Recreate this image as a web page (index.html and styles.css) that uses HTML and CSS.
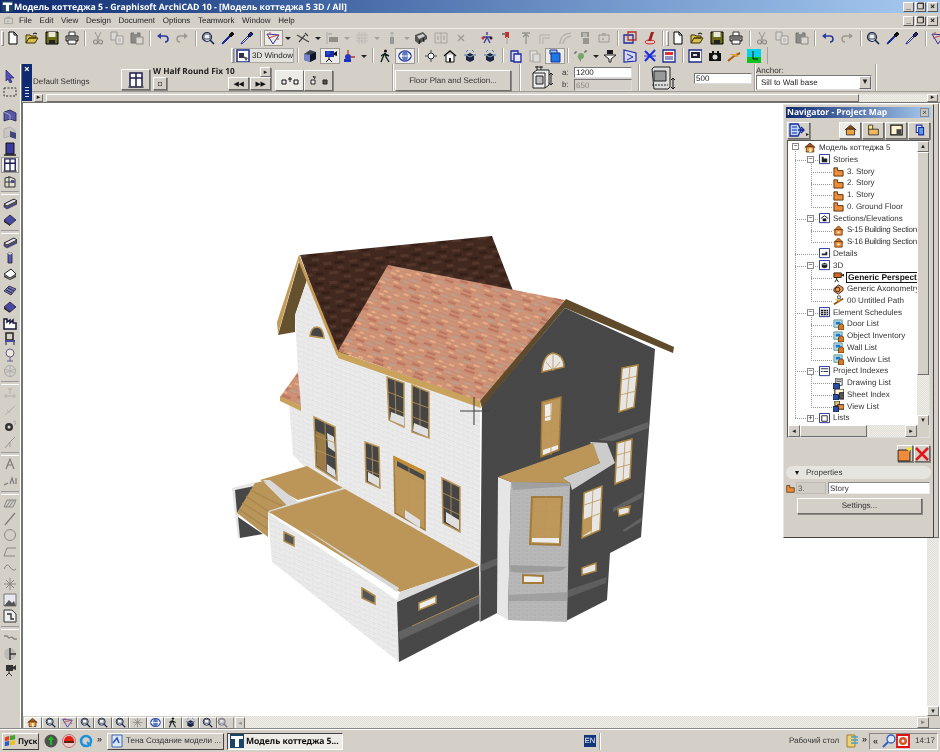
FILE: index.html
```html
<!DOCTYPE html>
<html lang="ru">
<head>
<meta charset="utf-8">
<title>Модель коттеджа 5 - Graphisoft ArchiCAD 10</title>
<link rel="stylesheet" href="styles.css">
</head>
<body>
<svg class="defs" xmlns="http://www.w3.org/2000/svg">
  <symbol id="doc" viewBox="0 0 14 14"><path d="M3 1h5l3 3v9H3z" fill="#fff" stroke="#000"/><path d="M8 1v3h3" fill="none" stroke="#000"/></symbol>
  <symbol id="open" viewBox="0 0 14 14"><path d="M1 12V4h4l1 1h5v2H4l-3 5h9l3-5H4" fill="#d8c050" stroke="#3a3000"/><path d="M8 3q2-2 4 0" fill="none" stroke="#000"/></symbol>
  <symbol id="save" viewBox="0 0 14 14"><path d="M1 1h12v12H1z" fill="#6d6a18" stroke="#000"/><path d="M3.500 1h7v5h-7z" fill="#e8e8d8"/><path d="M4 9h6v4H4z" fill="#222"/></symbol>
  <symbol id="print" viewBox="0 0 14 14"><path d="M4 1h6v4H4z" fill="#fff" stroke="#333"/><path d="M1 5h12v5H1z" fill="#b8b4ac" stroke="#222"/><path d="M3 9h8v4H3z" fill="#fff" stroke="#222"/><path d="M2 7h10" stroke="#333"/></symbol>
  <symbol id="cut" viewBox="0 0 14 14"><path d="M4 1l4 8M10 1L6 9" stroke="#9a9792" fill="none"/><circle cx="4.500" cy="11" r="2" fill="none" stroke="#8c8984" stroke-width="1.200"/><circle cx="9.500" cy="11" r="2" fill="none" stroke="#8c8984" stroke-width="1.200"/></symbol>
  <symbol id="copy" viewBox="0 0 14 14"><path d="M1 1h6v8H1z" fill="#d8d6d0" stroke="#9c9994"/><path d="M6 5h7v8H6z" fill="#e0ded8" stroke="#9c9994"/><path d="M8 8h3M8 10h3" stroke="#aaa"/></symbol>
  <symbol id="paste" viewBox="0 0 14 14"><path d="M1 2h9v10H1z" fill="#8c8a84" stroke="#77746f"/><path d="M4 1h3v2H4z" fill="#ccc"/><path d="M6 6h7v7H6z" fill="#d8d6d0" stroke="#8c8984"/></symbol>
  <symbol id="undo" viewBox="0 0 14 14"><path d="M3 5h6q3 0 3 3t-3 3" fill="none" stroke="#2a3aa0" stroke-width="1.600"/><path d="M1 5l4-3v6z" fill="#2a3aa0"/></symbol>
  <symbol id="redo" viewBox="0 0 14 14"><path d="M11 5H5Q2 5 2 8t3 3" fill="none" stroke="#9c9994" stroke-width="1.500"/><path d="M13 5L9 2v6z" fill="#9c9994"/></symbol>
  <symbol id="zoom" viewBox="0 0 14 14"><circle cx="6" cy="6" r="4.500" fill="#e8f0f8" stroke="#12204c" stroke-width="1.200"/><path d="M9 9l4 4" stroke="#12204c" stroke-width="1.600"/><path d="M3 3h6v5H3z" fill="none" stroke="#444"/></symbol>
  <symbol id="pick" viewBox="0 0 14 14"><path d="M1 13l2-1 6-6-1-1-6 6z" fill="#1a2c9c" stroke="#1a2c9c"/><path d="M8 4l3-3 2 2-3 3z" fill="#111" stroke="#111"/></symbol>
  <symbol id="inj" viewBox="0 0 14 14"><path d="M1 13l2-1 6-6-1-1-6 6z" fill="#fff" stroke="#1a2c9c"/><path d="M8 4l3-3 2 2-3 3z" fill="#1a2c9c" stroke="#111"/></symbol>
  <symbol id="grav" viewBox="0 0 14 14"><path d="M1 3l12 1-6 9z" fill="none" stroke="#3030a0"/><path d="M2 7l10-3M4 1v3M11 8h2" stroke="#c04040" fill="none"/></symbol>
  <symbol id="trim" viewBox="0 0 14 14"><path d="M1 4l12 7M3 11l6-7M9 2l3 3" fill="none" stroke="#444" stroke-width="1.200"/></symbol>
  <symbol id="align" viewBox="0 0 14 14"><path d="M1 1v12" stroke="#aaa"/><path d="M3 6h9v5H3z" fill="#8f8d85"/><path d="M2 3h4" stroke="#999"/></symbol>
  <symbol id="grid" viewBox="0 0 14 14"><path d="M1 4h12M1 7h12M1 10h12M4 1v12M7 1v12M10 1v12" stroke="#bdbab4" fill="none"/></symbol>
  <symbol id="elev" viewBox="0 0 14 14"><path d="M5 6h4v7H5z" fill="#999"/><path d="M7 1v5M5 3l2-2 2 2" stroke="#aaa" fill="none"/></symbol>
  <symbol id="cam3d" viewBox="0 0 14 14"><path d="M1 4l8-3 4 4v3l-8 5-4-3z" fill="#555"/><path d="M3 5l6-2 2 2-6 3z" fill="#cfcfcf"/><path d="M5 13l1-4M10 11l-1-4" stroke="#111"/></symbol>
  <symbol id="half" viewBox="0 0 14 14"><path d="M1 2h12v10H1z" fill="none" stroke="#aaa6a0"/><path d="M7 2v10" stroke="#aaa6a0"/><path d="M3 5h2v4H3zM9 5h2v4H9z" fill="#b8b5af"/></symbol>
  <symbol id="x" viewBox="0 0 14 14"><path d="M4 4l6 6M10 4l-6 6" stroke="#a09d98" stroke-width="1.500"/></symbol>
  <symbol id="fig" viewBox="0 0 14 14"><path d="M7 1v3M3 6h8M4 12l3-6 3 6" stroke="#3f3fa0" fill="none" stroke-width="1.400"/><circle cx="3" cy="7" r="1.500" fill="#c03030"/><circle cx="11" cy="7" r="1.500" fill="#222"/></symbol>
  <symbol id="saw" viewBox="0 0 14 14"><path d="M6 1h4v6H6z" fill="#c83030"/><path d="M8 6v7" stroke="#bbb" stroke-width="2"/><path d="M3 3h4" stroke="#777" stroke-width="2"/></symbol>
  <symbol id="up" viewBox="0 0 14 14"><path d="M3 2h8M7 2v11M4 6l3-3 3 3" stroke="#98958f" fill="none" stroke-width="1.300"/></symbol>
  <symbol id="corner" viewBox="0 0 14 14"><path d="M2 13V4h10M5 13V7h7" fill="none" stroke="#b0ada8"/></symbol>
  <symbol id="arc" viewBox="0 0 14 14"><path d="M2 13Q2 3 13 2M5 13Q5 7 13 5" fill="none" stroke="#b0ada8" stroke-width="1.200"/></symbol>
  <symbol id="blk" viewBox="0 0 14 14"><path d="M3 1h8v5H3zM5 7h6v6H5z" fill="#98958f"/><path d="M6 2v4M8 2v4" stroke="#ddd"/></symbol>
  <symbol id="blk2" viewBox="0 0 14 14"><path d="M2 4h10v7H2z" fill="none" stroke="#9c9994"/><path d="M5 2h4v3H5z" fill="#aaa"/><path d="M5 7h2v2H5z" fill="#aaa"/></symbol>
  <symbol id="solid" viewBox="0 0 14 14"><path d="M1 4h9v8H1z" fill="none" stroke="#1a2c9c" stroke-width="1.300"/><path d="M5 1h8v8H5z" fill="none" stroke="#b03030" stroke-width="1.300"/></symbol>
  <symbol id="eras" viewBox="0 0 14 14"><ellipse cx="7" cy="11" rx="5" ry="2" fill="none" stroke="#e02020"/><path d="M5 10l3-9h3l-3 9z" fill="#a02020"/></symbol>
  <symbol id="win3d" viewBox="0 0 14 14"><path d="M1 1h12v12H1z" fill="#fff" stroke="#1a2a8c" stroke-width="1.500"/><path d="M3 4h5v5H3z" fill="#334"/><path d="M7 7l5 2-2 3z" fill="#555"/></symbol>
  <symbol id="cube" viewBox="0 0 14 14"><path d="M1 5l6-4 6 2v7l-6 3-6-2z" fill="#39434f"/><path d="M1 5l6 1v7l-6-2z" fill="#7484c8"/><path d="M7 6l6-3v7l-6 3z" fill="#10162a"/></symbol>
  <symbol id="cam" viewBox="0 0 14 14"><path d="M2 2h9v6H2z" fill="#1b2ea0"/><circle cx="5" cy="4" r="2" fill="#2b4ad8"/><path d="M11 4l3-2v5l-3-1z" fill="#111"/><path d="M6 8v2M3 13l3-3 3 3" stroke="#111" fill="none"/></symbol>
  <symbol id="axis" viewBox="0 0 14 14"><path d="M2 10h7v3H2z" fill="#2030c0"/><circle cx="6" cy="8" r="3" fill="#2038c8"/><path d="M6 1v5M9 8h4" stroke="#c03030" stroke-width="1.300"/></symbol>
  <symbol id="walk" viewBox="0 0 14 14"><circle cx="7.500" cy="2" r="1.500" fill="#111"/><path d="M7 4L5 8l-2 5M7 4l1 4 3 5M7 5l4 2M6 5L3 7" stroke="#122" fill="none" stroke-width="1.400"/></symbol>
  <symbol id="orb" viewBox="0 0 14 14"><ellipse cx="7" cy="7" rx="6" ry="5" fill="none" stroke="#2a3aa8" stroke-width="1.500"/><ellipse cx="7" cy="7" rx="3" ry="5" fill="#5a7ac0"/><path d="M1 7h12" stroke="#fff"/></symbol>
  <symbol id="sun" viewBox="0 0 14 14"><path d="M7 1v12M1 7h12" stroke="#444"/><circle cx="7" cy="7" r="3" fill="#fff" stroke="#333"/></symbol>
  <symbol id="home" viewBox="0 0 14 14"><path d="M1 7l6-5 6 5" fill="none" stroke="#111" stroke-width="1.400"/><path d="M3 6v7h8V6" fill="#fff" stroke="#111"/><path d="M6 9h2v4H6z" fill="#111"/></symbol>
  <symbol id="orbit" viewBox="0 0 14 14"><path d="M3 3l2-2M11 3L9 1M1 6h2M11 6h2" stroke="#3a78c8"/><path d="M3 6l4-2 4 2v5l-4 2-4-2z" fill="#1d2544"/><path d="M3 6l4 2 4-2" stroke="#8ab" fill="none"/></symbol>
  <symbol id="doc3" viewBox="0 0 14 14"><path d="M2 2h7v10H2z" fill="#d8d8f0" stroke="#1a2a9c" stroke-width="1.300"/><path d="M5 5h7v8H5z" fill="#e8e8f8" stroke="#1a2a9c" stroke-width="1.300"/></symbol>
  <symbol id="doc4" viewBox="0 0 14 14"><path d="M2 2h7v10H2z" fill="#e4e2dc" stroke="#aaa7a2" stroke-width="1.200"/><path d="M5 5h7v8H5z" fill="#dedcd6" stroke="#aaa7a2" stroke-width="1.200"/></symbol>
  <symbol id="doc5" viewBox="0 0 14 14"><path d="M2 1h7v4H2z" fill="#9cc8f0" stroke="#1a2a9c"/><path d="M3 4h9v9H3z" fill="#1e78e0" stroke="#1a2a9c"/></symbol>
  <symbol id="pin" viewBox="0 0 14 14"><path d="M3 7l4 3 4-3-4 3v3z" fill="#5c9a50"/><circle cx="7" cy="7" r="3" fill="#72a868"/><path d="M1 3h2M11 2h2M11 2v2M1 3v2" stroke="#555" fill="none"/></symbol>
  <symbol id="funnel" viewBox="0 0 14 14"><path d="M4 1h6v4H4z" fill="#1b1b1b"/><path d="M1 6h12L8 10v3H6v-3z" fill="#fff" stroke="#222"/></symbol>
  <symbol id="sect" viewBox="0 0 14 14"><path d="M1 1l12 3v8L1 13z" fill="#d8d8f4" stroke="#1a2a9c" stroke-width="1.200"/><path d="M4 5l6 3-6 3" fill="none" stroke="#1a2a9c"/></symbol>
  <symbol id="xblue" viewBox="0 0 14 14"><path d="M2 2l10 10M12 1L2 12" stroke="#1b2cd8" stroke-width="2"/><path d="M1 7h12" stroke="#1b2cd8"/></symbol>
  <symbol id="d3" viewBox="0 0 14 14"><path d="M1 1h12v12H1z" fill="#fff" stroke="#1a2a8c" stroke-width="1.300"/><path d="M3 3h8v3H3z" fill="#e03030"/><path d="M3 8h8M3 10h8" stroke="#1a2a8c"/></symbol>
  <symbol id="film" viewBox="0 0 14 14"><path d="M1 1h13v12H1z" fill="#fff" stroke="#1a2a8c" stroke-width="1.300"/><path d="M3 3h9v6H3z" fill="#223"/><path d="M5 5h4v2H5z" fill="#ddd"/></symbol>
  <symbol id="photo" viewBox="0 0 14 14"><path d="M1 4h12v8H1z" fill="#111"/><circle cx="7" cy="8" r="2.500" fill="#ddd"/><path d="M4 2h2v2H4zM9 2h2v2H9z" fill="#111"/></symbol>
  <symbol id="key" viewBox="0 0 14 14"><path d="M1 12l6-5 6-3" stroke="#a06010" stroke-width="2" fill="none"/><path d="M2 5h7l3 2-2 1z" fill="#e0a030"/></symbol>
  <symbol id="land" viewBox="0 0 14 14"><path d="M0 0h14v8H0z" fill="#0cd0e8"/><path d="M0 8h14v6H0z" fill="#10c020"/><path d="M6 2v8h5" fill="none" stroke="#111"/></symbol>
  <symbol id="win" viewBox="0 0 16 16"><path d="M2 1h12v14H2z" fill="#fff" stroke="#1b1b50" stroke-width="1.500"/><path d="M8 1v14M2 6h12" stroke="#1b1b50" stroke-width="1.500"/><path d="M0 15h16" stroke="#555"/></symbol>
  <symbol id="arrowt" viewBox="0 0 14 14"><path d="M3 1l8 8H7l2 4-2 1-2-4-2 2z" fill="#5050c0" stroke="#20205c" stroke-width=".7"/></symbol>
  <symbol id="marq" viewBox="0 0 14 14"><path d="M1 3h12v8H1z" fill="none" stroke="#333" stroke-dasharray="2 1.500"/></symbol>
  <symbol id="twall" viewBox="0 0 14 14"><path d="M1 3l6-2 6 3v8L7 10l-6 2z" fill="#5858a8" stroke="#20204c" stroke-width=".8"/><path d="M1 3l6 3v4" fill="none" stroke="#aab"/></symbol>
  <symbol id="twall2" viewBox="0 0 14 14"><path d="M1 3l6-2 5 3v8l-5-2-6 2z" fill="#c8c6c0" stroke="#aaa" stroke-width=".8"/><path d="M7 5l6 2v6l-6-2z" fill="#45457c"/></symbol>
  <symbol id="tdoor" viewBox="0 0 14 14"><path d="M3 1h8v11H3z" fill="#3c3ca0" stroke="#111"/><path d="M1 13h12" stroke="#111" stroke-width="1.400"/></symbol>
  <symbol id="tcurt" viewBox="0 0 14 14"><path d="M2 4l5-1 5 2v8H2z" fill="#e0dfd0" stroke="#333"/><path d="M6 2v11M2 8h10" stroke="#333"/><path d="M8 6h3v3H8z" fill="#4a4ab0"/></symbol>
  <symbol id="tbeam" viewBox="0 0 14 14"><path d="M1 8l10-5 3 2-10 5z" fill="#e4e4ec" stroke="#222"/><path d="M1 9l3 2 10-5v2L4 13l-3-2z" fill="#5050a0" stroke="#222" stroke-width=".6"/></symbol>
  <symbol id="tslab" viewBox="0 0 14 14"><path d="M1 7l6-5 6 5-6 5z" fill="#4848a8" stroke="#222" stroke-width=".8"/><path d="M1 7l6 5v1L1 9z" fill="#222"/></symbol>
  <symbol id="tcol" viewBox="0 0 14 14"><path d="M5 2h4v10H5z" fill="#5858b8" stroke="#222" stroke-width=".8"/><ellipse cx="7" cy="2.500" rx="2" ry="1" fill="#ddd"/></symbol>
  <symbol id="troof" viewBox="0 0 14 14"><path d="M1 7l7-5 5 5-6 4z" fill="#fff" stroke="#222"/><path d="M1 8l6 4 6-4v2l-6 3-6-3z" fill="#333"/></symbol>
  <symbol id="tstair" viewBox="0 0 14 14"><path d="M1 8l5-5 7 3-5 6z" fill="#7878c8" stroke="#222" stroke-width=".8"/><path d="M3 7l6 3M5 5l6 3" stroke="#222"/></symbol>
  <symbol id="tplan" viewBox="0 0 14 14"><path d="M1 3h3v3l3-2v3l3-3v3h3v6H1z" fill="#fff" stroke="#16163c" stroke-width="1.500"/></symbol>
  <symbol id="tchair" viewBox="0 0 14 14"><path d="M3 1h7v7H3z" fill="none" stroke="#222" stroke-width="1.500"/><path d="M2 8h10v2H2z" fill="#4848a0"/><path d="M3 10v3M11 10v3" stroke="#222"/></symbol>
  <symbol id="tlamp" viewBox="0 0 14 14"><circle cx="7" cy="5" r="4" fill="#ece8d4" stroke="#60608c"/><path d="M7 9v4M4 13h6" stroke="#60608c"/></symbol>
  <symbol id="tmesh" viewBox="0 0 14 14"><circle cx="7" cy="7" r="5.500" fill="none" stroke="#aaa"/><path d="M2 5l10 4M2 9l10-4M7 2v10" stroke="#b0b0b0"/></symbol>
  <symbol id="tdim" viewBox="0 0 14 14"><path d="M1 10h12M3 8v4M11 8v4M5 3h4M7 3v5" stroke="#b2afa9" fill="none"/></symbol>
  <symbol id="tdim2" viewBox="0 0 14 14"><path d="M2 12L12 3M4 7l3 3" stroke="#b2afa9" fill="none"/></symbol>
  <symbol id="tgear" viewBox="0 0 14 14"><circle cx="6" cy="8" r="4" fill="#333"/><circle cx="6" cy="8" r="1.500" fill="#ddd"/><path d="M10 2l3 1-1 3" stroke="#aaa" fill="none"/></symbol>
  <symbol id="tang" viewBox="0 0 14 14"><path d="M2 13l5-6M7 7l5-5M7 7v5" stroke="#9c9994"/></symbol>
  <symbol id="ttext" viewBox="0 0 14 14"><path d="M3 12l4-10 4 10M5 8h4" fill="none" stroke="#7c7a76" stroke-width="1.200"/></symbol>
  <symbol id="tlabel" viewBox="0 0 14 14"><path d="M1 12l4-2M7 11l2-6 2 6M13 5v6" stroke="#777" fill="none" stroke-width="1.100"/></symbol>
  <symbol id="tfill" viewBox="0 0 14 14"><path d="M1 11l3-7h9l-3 7z" fill="#cfcdc7" stroke="#8a8883"/><path d="M3 11l5-7M6 11l5-7" stroke="#8a8883"/></symbol>
  <symbol id="tline" viewBox="0 0 14 14"><path d="M2 13L12 1" stroke="#7c7a76" stroke-width="1.200"/></symbol>
  <symbol id="tcirc" viewBox="0 0 14 14"><circle cx="7" cy="7" r="5.500" fill="none" stroke="#8a8883"/></symbol>
  <symbol id="tpoly" viewBox="0 0 14 14"><path d="M1 12l3-8h9M1 12h11" fill="none" stroke="#8a8883"/></symbol>
  <symbol id="tspl" viewBox="0 0 14 14"><path d="M1 9q3-7 6-2t6 2" fill="none" stroke="#8a8883"/></symbol>
  <symbol id="tstar" viewBox="0 0 14 14"><path d="M7 1v12M1 7h12M3 3l8 8M11 3l-8 8" stroke="#8a8883"/></symbol>
  <symbol id="tpic" viewBox="0 0 14 14"><path d="M1 1h12v12H1z" fill="#e8e8ee" stroke="#777"/><path d="M1 13l5-6 3 3 2-2 2 5z" fill="#555"/></symbol>
  <symbol id="tdraw" viewBox="0 0 14 14"><path d="M1 1h8l4 4v8H1z" fill="#eee" stroke="#333"/><path d="M4 5h4v5h3" fill="none" stroke="#333" stroke-width="1.400"/></symbol>
  <symbol id="tsec" viewBox="0 0 14 14"><path d="M1 5h3l2 2 3-1 2 2h3" fill="none" stroke="#88857f" stroke-width="1.300"/></symbol>
  <symbol id="tdet" viewBox="0 0 14 14"><circle cx="7" cy="7" r="6" fill="#bcbab4"/><path d="M7 1v12M7 7h6" stroke="#333" stroke-width="1.400"/></symbol>
  <symbol id="tcam" viewBox="0 0 14 14"><path d="M3 2h7v6H3z" fill="#333"/><path d="M10 4l3-2v5l-3-1z" fill="#333"/><path d="M6 8v2M3 13l3-3 3 3" stroke="#333" fill="none"/></symbol>
  <symbol id="s-home" viewBox="0 0 16 14"><path d="M1 7l7-6 7 6" fill="#a8541a" stroke="#3c2208"/><path d="M3 6h10v7H3z" fill="#f09a40" stroke="#3c2208"/><path d="M7 8h3v5H7z" fill="#fff4c0"/></symbol>
  <symbol id="s-story" viewBox="0 0 12 12"><path d="M1 2h4v3h6v6H1z" fill="#ee8c3c" stroke="#50300c"/></symbol>
  <symbol id="s-stories" viewBox="0 0 12 12"><path d="M.5.500h11v10H.5z" fill="#fff" stroke="#1a2a9c"/><path d="M3 3h2v2h4v4H3z" fill="#222"/></symbol>
  <symbol id="s-sec" viewBox="0 0 12 12"><path d="M.5.500h11v10H.5z" fill="#fff" stroke="#1a2a9c"/><path d="M2 6l4-3 4 3" fill="none" stroke="#111"/><path d="M4 6h4v3H4z" fill="#111"/></symbol>
  <symbol id="s-house" viewBox="0 0 12 12"><path d="M1 6l5-5 5 5" fill="#d87a28" stroke="#6c3a10"/><path d="M2 5h8v6H2z" fill="#f09040" stroke="#6c3a10"/><path d="M5 7h2v2H5z" fill="#fff"/></symbol>
  <symbol id="s-det" viewBox="0 0 12 12"><path d="M.5.500h11v10H.5z" fill="#fff" stroke="#1a2a9c"/><path d="M3 8h6V4H7v2H3z" fill="#223"/></symbol>
  <symbol id="s-3d" viewBox="0 0 12 12"><path d="M.5.500h11v10H.5z" fill="#fff" stroke="#1a2a9c"/><path d="M3 4l3-1 3 1v4l-3 1-3-1z" fill="#222"/><path d="M3 4l3 1 3-1" stroke="#ccc" fill="none"/></symbol>
  <symbol id="s-persp" viewBox="0 0 12 12"><path d="M1 1h8v5H1z" fill="#d06a20" stroke="#321"/><path d="M9 3l3-1v3L9 4z" fill="#222"/><path d="M4 6v2M2 11l2-3 2 3" stroke="#111" fill="none"/></symbol>
  <symbol id="s-axo" viewBox="0 0 12 12"><path d="M1 5l5-4 5 3v3l-5 4-5-3z" fill="#ee9a48" stroke="#422"/><circle cx="5" cy="6" r="2.500" fill="none" stroke="#222"/></symbol>
  <symbol id="s-path" viewBox="0 0 12 12"><path d="M1 10l5-3 5-3" stroke="#8a5010" stroke-width="2"/><path d="M2 5h5l2 1-3 1z" fill="#e09828"/><path d="M5 1h3v3H5z" fill="none" stroke="#555"/></symbol>
  <symbol id="s-sched" viewBox="0 0 12 12"><path d="M.5.500h11v10H.5z" fill="#fff" stroke="#1a2a9c"/><path d="M2 3h8v6H2z" fill="#111"/><path d="M2 5h8M2 7h8M5 3v6M8 3v6" stroke="#fff" stroke-width=".7"/></symbol>
  <symbol id="s-lists" viewBox="0 0 12 12"><path d="M.5.500h11v10H.5z" fill="#fff" stroke="#1a2a9c"/><path d="M3 3h6v6H3z" fill="none" stroke="#222"/></symbol>
  <symbol id="s-list" viewBox="0 0 12 12"><path d="M1 1h9v8H1z" fill="#b8e0e8" stroke="#5c8c90"/><path d="M3 3h5v3H3z" fill="#1878d0"/><path d="M6 7l3-2 3 2v5H6z" fill="#d87820" stroke="#2c1c08" stroke-width=".7"/></symbol>
  <symbol id="s-idx" viewBox="0 0 12 12"><path d="M.5.500h11v10H.5z" fill="#fff" stroke="#1a2a9c"/><path d="M2 3h8" stroke="#223"/><path d="M2 6h2M5 6h5" stroke="#223"/></symbol>
  <symbol id="s-draw" viewBox="0 0 12 12"><path d="M3 0h7v8H3z" fill="#fff" stroke="#333"/><path d="M4 2h5M4 4h5" stroke="#333"/><path d="M0 6h7v6H0z" fill="#2c4cb0" stroke="#123"/></symbol>
  <symbol id="s-sheet" viewBox="0 0 12 12"><path d="M2 0h10v8H2z" fill="#fff4d8" stroke="#222" stroke-width="1.200"/><path d="M7 4h5v7H7z" fill="#555" stroke="#222"/><path d="M0 6h6v6H0z" fill="#2c4cb0" stroke="#123"/></symbol>
  <symbol id="s-view" viewBox="0 0 12 12"><path d="M2 0h5v5H2z" fill="#e8c870" stroke="#333"/><path d="M5 4h7v5H5z" fill="#ee8c3c" stroke="#222"/><path d="M0 6h6v6H0z" fill="#2c4cb0" stroke="#123"/></symbol>
  <symbol id="n-map" viewBox="0 0 16 14"><path d="M1 7l7-6 7 6" fill="#8c4a10" stroke="#222"/><path d="M3 6h10v7H3z" fill="#f0a040" stroke="#222"/></symbol>
  <symbol id="n-view" viewBox="0 0 16 14"><path d="M2 1h5v6H2z" fill="#fff080" stroke="#222"/><path d="M2 6h12v7H2z" fill="#f0b860" stroke="#222"/></symbol>
  <symbol id="n-layout" viewBox="0 0 16 14"><path d="M1 1h14v12H1z" fill="#fff4d0" stroke="#111" stroke-width="1.400"/><path d="M8 6h6v6H8z" fill="#444"/></symbol>
  <symbol id="n-pub" viewBox="0 0 16 14"><path d="M4 1h7v9H4z" fill="#d8e8ff" stroke="#1a2a9c" stroke-width="1.300"/><path d="M7 4h6v9H7z" fill="#5c9ae0" stroke="#1a2a9c" stroke-width="1.300"/></symbol>
  <symbol id="n-side" viewBox="0 0 16 14"><path d="M1 1h8l3 6-3 6H1z" fill="#b8d8f8" stroke="#1a2a9c" stroke-width="1.300"/><path d="M9 7h6M12 4l3 3-3 3" fill="none" stroke="#1a2a9c" stroke-width="1.400"/><path d="M3 4h5M3 7h5M3 10h5" stroke="#1a2a9c"/></symbol>
  <symbol id="n-new" viewBox="0 0 16 16"><path d="M1 4h12v11H1z" fill="#ee8c3c" stroke="#222"/><path d="M12 0l1 2 2 1-2 1-1 2-1-2-2-1 2-1z" fill="#ffe820"/></symbol>
  <symbol id="n-del" viewBox="0 0 16 16"><path d="M2 2l12 12M14 2L2 14" stroke="#e01818" stroke-width="2.600"/></symbol>
  <symbol id="q-green" viewBox="0 0 14 14"><circle cx="7" cy="7" r="6.500" fill="#505050"/><path d="M7 2l3 4H8v5H6V6H4z" fill="#18c020"/></symbol>
  <symbol id="q-red" viewBox="0 0 14 14"><circle cx="7" cy="7" r="6.500" fill="#e8c8c8" stroke="#c07070"/><path d="M2 7a5 5 0 0110 0z" fill="#e02010"/><path d="M2 7h10v2H2z" fill="#602010"/></symbol>
  <symbol id="q-blue" viewBox="0 0 14 14"><circle cx="7" cy="7" r="5" fill="none" stroke="#2090d8" stroke-width="2.600"/><path d="M8 8l4 4" stroke="#2090d8" stroke-width="2"/></symbol>
  <symbol id="q-doc" viewBox="0 0 14 14"><path d="M2 1h10v12H2z" fill="#d8e8f8" stroke="#4468a8"/><path d="M3 9l4-5 2 5" stroke="#3050c0" fill="none" stroke-width="1.600"/></symbol>
  <symbol id="q-app" viewBox="0 0 14 14"><path d="M0 0h14v14H0z" fill="#1a4468"/><path d="M1 2h12v3H9v8H5V5H1z" fill="#fff"/></symbol>
  <symbol id="q-flag" viewBox="0 0 14 14"><path d="M1 3l5-2v5l-5 1z" fill="#e04020"/><path d="M7 1l6-1v5l-6 1z" fill="#40a030"/><path d="M1 8l5-1v5l-5 1z" fill="#2060d0"/><path d="M7 7l6-1v5l-6 1z" fill="#f0c020"/></symbol>
  <symbol id="q-desk" viewBox="0 0 14 14"><path d="M2 1h8v12H2z" fill="#f0d070" stroke="#a08030"/><path d="M6 3h7M6 6h7M6 9h7" stroke="#40a0d0" stroke-width="1.500"/></symbol>
  <symbol id="q-find" viewBox="0 0 14 14"><circle cx="9" cy="5" r="4" fill="#d8e8ff" stroke="#3060c0" stroke-width="1.300"/><path d="M6 8l-5 5" stroke="#3060c0" stroke-width="2"/></symbol>
  <symbol id="q-rec" viewBox="0 0 14 14"><path d="M1 1h12v12H1z" fill="#fff" stroke="#e01010" stroke-width="1.800"/><circle cx="7" cy="7" r="4" fill="#e05020"/><circle cx="7" cy="7" r="1.500" fill="#fff"/></symbol>
  <symbol id="b-a" viewBox="0 0 20 14"><path d="M2 6h4v4H2zM14 6h4v4h-4z" fill="#eee" stroke="#111"/><path d="M10 3v5M8 5h4" stroke="#111"/></symbol>
  <symbol id="b-b" viewBox="0 0 20 14"><path d="M2 6h4v4H2z" fill="#eee" stroke="#222"/><path d="M14 6h4v4h-4z" fill="#555" stroke="#222"/><path d="M4 2l2 3M7 3H4" stroke="#222" fill="none"/></symbol>
  <symbol id="big-a" viewBox="0 0 30 26"><path d="M4 8l4-3h12v15l-4 3H4z" fill="#eee" stroke="#222"/><path d="M4 8h12v15" fill="none" stroke="#222"/><path d="M7 11h7v8H7z" fill="#bbb" stroke="#222"/><path d="M8 1v4M12 1v4M6 2h8" stroke="#222"/><path d="M22 8v12M20 10l2-2 2 2M20 18l2 2 2-2" stroke="#222" fill="none"/></symbol>
  <symbol id="big-b" viewBox="0 0 30 26"><path d="M2 4l2-2h16v20l-2 2H4z" fill="#ddd" stroke="#222"/><path d="M4 6h12v10H4z" fill="#999" stroke="#222"/><path d="M2 20h16" stroke="#222" stroke-dasharray="2 1"/><path d="M23 13v11M21 15l2-2 2 2M21 22l2 2 2-2" stroke="#111" fill="none"/></symbol>
</svg>

<div class="titlebar">
  <svg class="ttl-ic"><use href="#q-app"/></svg>
  <span class="ttl-text">Модель коттеджа 5 - Graphisoft ArchiCAD 10 - [Модель коттеджа 5 3D / All]</span>
  <span class="winbtns"><b class="wb">_</b><b class="wb">❐</b><b class="wb">×</b></span>
</div>

<div class="menubar">
  <svg class="menu-ic"><use href="#blk2"/></svg>
  <span class="mi">File</span><span class="mi">Edit</span><span class="mi">View</span><span class="mi">Design</span><span class="mi">Document</span><span class="mi">Options</span><span class="mi">Teamwork</span><span class="mi">Window</span><span class="mi">Help</span>
  <span class="winbtns"><b class="wb">_</b><b class="wb">❐</b><b class="wb">×</b></span>
</div>

<div class="tb1">
  <i class="grip"></i>
  <span class="s"><svg class="i"><use href="#doc"/></svg></span><span class="s"><svg class="i"><use href="#open"/></svg></span><span class="s"><svg class="i"><use href="#save"/></svg></span><span class="s"><svg class="i"><use href="#print"/></svg></span><i class="sep"></i>
  <span class="s"><svg class="i"><use href="#cut"/></svg></span><span class="s"><svg class="i"><use href="#copy"/></svg></span><span class="s"><svg class="i"><use href="#paste"/></svg></span><i class="sep"></i>
  <span class="s"><svg class="i"><use href="#undo"/></svg></span><span class="s"><svg class="i"><use href="#redo"/></svg></span><i class="sep"></i>
  <span class="s"><svg class="i"><use href="#zoom"/></svg></span><span class="s"><svg class="i"><use href="#pick"/></svg></span><span class="s"><svg class="i"><use href="#inj"/></svg></span><i class="sep"></i>
  <span class="s on"><svg class="i"><use href="#grav"/></svg></span><span class="ar"></span>
  <span class="s"><svg class="i"><use href="#trim"/></svg></span><span class="ar"></span>
  <span class="s"><svg class="i"><use href="#align"/></svg></span><span class="ar off"></span>
  <span class="s"><svg class="i"><use href="#grid"/></svg></span><span class="ar off"></span>
  <span class="s"><svg class="i"><use href="#elev"/></svg></span><span class="ar off"></span>
  <span class="s"><svg class="i"><use href="#cam3d"/></svg></span><span class="s"><svg class="i"><use href="#half"/></svg></span><span class="s"><svg class="i"><use href="#x"/></svg></span><i class="gap"></i>
  <span class="s"><svg class="i"><use href="#fig"/></svg></span><span class="s"><svg class="i"><use href="#saw"/></svg></span><span class="s"><svg class="i"><use href="#up"/></svg></span><span class="s"><svg class="i"><use href="#corner"/></svg></span><span class="s"><svg class="i"><use href="#arc"/></svg></span><span class="s"><svg class="i"><use href="#blk"/></svg></span><span class="s"><svg class="i"><use href="#blk2"/></svg></span><i class="sep"></i>
  <span class="s"><svg class="i"><use href="#solid"/></svg></span><span class="s"><svg class="i"><use href="#eras"/></svg></span><i class="sep"></i><i class="grip"></i>
  <span class="s"><svg class="i"><use href="#doc"/></svg></span><span class="s"><svg class="i"><use href="#open"/></svg></span><span class="s"><svg class="i"><use href="#save"/></svg></span><span class="s"><svg class="i"><use href="#print"/></svg></span><i class="sep"></i>
  <span class="s"><svg class="i"><use href="#cut"/></svg></span><span class="s"><svg class="i"><use href="#copy"/></svg></span><span class="s"><svg class="i"><use href="#paste"/></svg></span><i class="sep"></i>
  <span class="s"><svg class="i"><use href="#undo"/></svg></span><span class="s"><svg class="i"><use href="#redo"/></svg></span><i class="sep"></i>
  <span class="s"><svg class="i"><use href="#zoom"/></svg></span><span class="s"><svg class="i"><use href="#pick"/></svg></span><span class="s"><svg class="i"><use href="#inj"/></svg></span><i class="sep"></i>
  <span class="s"><svg class="i"><use href="#grav"/></svg></span>
</div>

<div class="tb2row">
  <div class="tb2">
    <i class="grip"></i>
    <span class="btn3d"><svg class="i"><use href="#win3d"/></svg>3D Window</span><i class="sep"></i>
    <span class="s"><svg class="i"><use href="#cube"/></svg></span><span class="s on"><svg class="i"><use href="#cam"/></svg></span><span class="s"><svg class="i"><use href="#axis"/></svg></span><span class="ar"></span><i class="sep"></i>
    <span class="s"><svg class="i"><use href="#walk"/></svg></span><span class="s on"><svg class="i"><use href="#orb"/></svg></span><i class="sep"></i>
    <span class="s"><svg class="i"><use href="#sun"/></svg></span><span class="s"><svg class="i"><use href="#home"/></svg></span><span class="s"><svg class="i"><use href="#orbit"/></svg></span><span class="s"><svg class="i"><use href="#orbit"/></svg></span><i class="sep"></i>
    <span class="s"><svg class="i"><use href="#doc3"/></svg></span><span class="s"><svg class="i"><use href="#doc4"/></svg></span><span class="s on"><svg class="i"><use href="#doc5"/></svg></span><i class="sep"></i>
    <span class="s"><svg class="i"><use href="#pin"/></svg></span><span class="ar"></span><span class="s"><svg class="i"><use href="#funnel"/></svg></span><span class="s"><svg class="i"><use href="#sect"/></svg></span><span class="s"><svg class="i"><use href="#xblue"/></svg></span><span class="s"><svg class="i"><use href="#d3"/></svg></span><i class="sep"></i>
    <span class="s"><svg class="i"><use href="#film"/></svg></span><span class="s"><svg class="i"><use href="#photo"/></svg></span><span class="s"><svg class="i"><use href="#key"/></svg></span><span class="s"><svg class="i"><use href="#land"/></svg></span>
  </div>
</div>

<div class="body">
  <aside class="toolbox">
    <span class="t"><svg class="i"><use href="#arrowt"/></svg></span><span class="t"><svg class="i"><use href="#marq"/></svg></span><i class="tsep first"></i>
    <span class="t"><svg class="i"><use href="#twall"/></svg></span><span class="t"><svg class="i"><use href="#twall2"/></svg></span><span class="t"><svg class="i"><use href="#tdoor"/></svg></span><span class="t on"><svg class="i"><use href="#win"/></svg></span><span class="t"><svg class="i"><use href="#tcurt"/></svg></span><i class="tsep line"></i>
    <span class="t"><svg class="i"><use href="#tbeam"/></svg></span><span class="t"><svg class="i"><use href="#tslab"/></svg></span><i class="tsep line"></i>
    <span class="t"><svg class="i"><use href="#tbeam"/></svg></span><span class="t"><svg class="i"><use href="#tcol"/></svg></span><span class="t"><svg class="i"><use href="#troof"/></svg></span><span class="t"><svg class="i"><use href="#tstair"/></svg></span><span class="t"><svg class="i"><use href="#tslab"/></svg></span><span class="t"><svg class="i"><use href="#tplan"/></svg></span><span class="t"><svg class="i"><use href="#tchair"/></svg></span><span class="t"><svg class="i"><use href="#tlamp"/></svg></span><span class="t"><svg class="i"><use href="#tmesh"/></svg></span><i class="tsep line"></i>
    <span class="t"><svg class="i"><use href="#tdim"/></svg></span><span class="t"><svg class="i"><use href="#tdim2"/></svg></span><span class="t"><svg class="i"><use href="#tgear"/></svg></span><span class="t"><svg class="i"><use href="#tang"/></svg></span><i class="tsep line"></i>
    <span class="t"><svg class="i"><use href="#ttext"/></svg></span><span class="t"><svg class="i"><use href="#tlabel"/></svg></span><i class="tsep line"></i>
    <span class="t"><svg class="i"><use href="#tfill"/></svg></span><span class="t"><svg class="i"><use href="#tline"/></svg></span><span class="t"><svg class="i"><use href="#tcirc"/></svg></span><span class="t"><svg class="i"><use href="#tpoly"/></svg></span><span class="t"><svg class="i"><use href="#tspl"/></svg></span><span class="t"><svg class="i"><use href="#tstar"/></svg></span><span class="t"><svg class="i"><use href="#tpic"/></svg></span><span class="t"><svg class="i"><use href="#tdraw"/></svg></span><i class="tsep line"></i>
    <span class="t"><svg class="i"><use href="#tsec"/></svg></span><span class="t"><svg class="i"><use href="#tdet"/></svg></span><span class="t"><svg class="i"><use href="#tcam"/></svg></span>
  </aside>

  <div class="work">
    <div class="infowrap">
      <div class="navystrip"><span class="navyx">×</span><i class="navygrip"></i></div>
      <div class="infocol">
        <div class="info">
          <span class="defset">Default Settings</span>
          <span class="bevel winbtn"><svg class="i16"><use href="#win"/></svg></span>
          <div class="namebox">
            <div class="namerow"><b class="name">W Half Round Fix 10</b><span class="bevel smallbtn">▸</span></div>
            <div class="namerow lower"><span class="bevel chk">▫</span><span class="pair"><span class="bevel nav">◀◀</span><span class="bevel nav">▶▶</span></span></div>
          </div>
          <div class="toggles"><span class="bevel tg active"><svg class="tgi"><use href="#b-a"/></svg></span><span class="bevel tg"><svg class="tgi"><use href="#b-b"/></svg></span></div>
          <i class="vline l1"></i>
          <span class="bevel fp">Floor Plan and Section...</span>
          <i class="vline l2"></i>
          <svg class="big ab"><use href="#big-a"/></svg>
          <div class="dims">
            <label class="dim"><span>a:</span><input class="fld" value="1200" readonly></label>
            <label class="dim"><span>b:</span><input class="fld dis" value="650" readonly></label>
          </div>
          <i class="vline l3"></i>
          <svg class="big hb"><use href="#big-b"/></svg>
          <input class="fld hfld" value="500" readonly>
          <i class="vline l4"></i>
          <div class="anchor">
            <span class="anch-l">Anchor:</span>
            <span class="select"><span>Sill to Wall base</span><b class="sarrow">▾</b></span>
          </div>
          <i class="vline l5"></i>
        </div>
        <div class="hstrip">
          <span class="sb-btn sm">▸</span><span class="hthumb"></span><span class="hdither"></span><span class="sb-btn end">▸</span>
        </div>
      </div>
    </div>

    <div class="canvasrow">
      <svg class="house" viewBox="23 103 904 613" xmlns="http://www.w3.org/2000/svg">
        <defs>
          <pattern id="tile" width="42" height="24" patternUnits="userSpaceOnUse" patternTransform="matrix(.94 .34 .5 -.86 0 0)">
            <rect width="42" height="24" fill="#cf9478"/>
            <g fill="#e8ab84"><rect x="1" y="1" width="5" height="2.300"/><rect x="15" y="5" width="6" height="2.300"/><rect x="28" y="9" width="5" height="2.300"/><rect x="6" y="13" width="6" height="2.300"/><rect x="21" y="17" width="5" height="2.300"/><rect x="35" y="21" width="5" height="2.300"/><rect x="30" y="17" width="4" height="2.300"/><rect x="24" y="21" width="4" height="2.300"/></g>
            <g fill="#bd7560"><rect x="9" y="1" width="9" height="2.300"/><rect x="30" y="5" width="9" height="2.300"/><rect x="2" y="9" width="8" height="2.300"/><rect x="24" y="13" width="9" height="2.300"/><rect x="9" y="21" width="11" height="2.300"/></g>
            <g fill="#bba08e"><rect x="24" y="1" width="6" height="2.300"/><rect x="4" y="5" width="6" height="2.300"/><rect x="16" y="9" width="6" height="2.300"/><rect x="36" y="13" width="5" height="2.300"/><rect x="1" y="17" width="6" height="2.300"/></g>
            <g stroke="#b07e68" stroke-width=".4"><path d="M0 4h42M0 8h42M0 12h42M0 16h42M0 20h42M0 24h42"/></g>
          </pattern>
          <pattern id="dtile" width="26" height="20" patternUnits="userSpaceOnUse" patternTransform="matrix(.99 -.1 .3 .95 0 0)">
            <rect width="26" height="20" fill="#42291f"/>
            <g fill="#52362a"><rect x="1" y="1" width="8" height="3"/><rect x="14" y="6" width="6" height="3"/><rect x="4" y="11" width="9" height="3"/><rect x="17" y="16" width="7" height="3"/></g>
            <g fill="#352017"><rect x="12" y="1" width="9" height="3"/><rect x="1" y="6" width="8" height="3"/><rect x="16" y="11" width="8" height="3"/></g>
          </pattern>
          <pattern id="brick" width="10" height="5" patternUnits="userSpaceOnUse" patternTransform="matrix(.94 .34 0 1 0 0)">
            <rect width="10" height="5" fill="#ececec"/>
            <path d="M0 2.500h10M0 5h10M3 0v2.500M8 2.500V5" stroke="#dcdcdc" stroke-width=".6"/>
          </pattern>
          <pattern id="brickg" width="8" height="4" patternUnits="userSpaceOnUse">
            <rect width="8" height="4" fill="#bababa"/>
            <path d="M0 2h8M0 4h8M3 0v2M7 2v2" stroke="#acacac" stroke-width=".5"/>
          </pattern>
          <pattern id="dark" width="6" height="4" patternUnits="userSpaceOnUse" patternTransform="matrix(.9 -.42 0 1 0 0)">
            <rect width="6" height="4" fill="#484848"/>
            <path d="M0 2h6" stroke="#424242" stroke-width=".5"/>
          </pattern>
        </defs>

        <!-- back roof -->
        <polygon fill="url(#dtile)" points="300,255 492,236 530,335 337,356"/>
        <!-- gable -->
        <polygon fill="#66512f" points="300,258 278,335 295,332 295,315 307,280"/>
        <polygon fill="url(#brick)" points="307,280 338,354 480,405 480,622 305,467 293,455 289,403 301,407 298,372 295,316"/>
        <polygon fill="#c49c58" points="300,256 278,334 277,322 299,255"/>
        <polygon fill="#c49c58" points="299,255 339,353 337,356 298,260"/>
        <!-- side roof -->
        <polygon fill="url(#tile)" points="298,372 280,397 301,406"/>
        <polygon fill="#c9a25c" points="280,396 301,406 301,411 280,401"/>

        <!-- front wall windows -->
        <g class="winfr">
          <path class="wd" d="M310 336q1-9 7-9t7 11z"/>
          <polygon class="wd" points="387,377 404,383 404,427 389,420"/>
          <polygon class="wd" points="412,385 429,392 429,438 412,432"/>
          <polygon class="wd" points="314,417 335,427 337,480 316,467"/>
          <polygon class="wd" points="365,442 379,447 380,488 366,482"/>
          <polygon class="wg" points="394,457 425,472 425,530 395,513"/>
          <polygon class="wd" points="442,478 460,487 460,532 443,523"/>
        </g>
        <polygon fill="#9c7d48" points="316,431 325,435 326,472 317,466"/>
        <polygon fill="#ddd" points="327,433 334,437 335,452 328,447"/>
        <polygon fill="#ddd" points="327,464 335,470 336,478 327,472"/>
        <polygon fill="#484848" points="397,461 424,475 424,480 397,466"/>
        <g class="mull">
          <path d="M395 381l1 43M388 392l16 6M389 407l15 6M420 389v46M412 402l17 6M413 417l16 6M325 422l1 50M315 435l20 8M316 450l20 8M372 445l1 40M365 457l14 5M366 470l14 5M409 465v55M394 470l31 14M395 486l30 14M394 458l31 15"/>
          <path d="M451 483v44M443 493l17 8M443 507l17 8"/>
        </g>
        <polygon fill="#e0e0e0" points="405,510 420,520 420,528 405,518"/>
        <polygon fill="#e0e0e0" points="391,412 404,417 404,426 390,420"/>
        <polygon fill="#e0e0e0" points="414,423 428,429 428,437 413,431"/>
        <polygon fill="#e0e0e0" points="446,512 459,520 459,530 446,522"/>
        <polygon fill="#e0e0e0" points="368,472 379,478 379,487 368,481"/>
        <polygon fill="#c98a2a" points="394,456 425,471 425,474 394,459"/>

        <!-- main roof -->
        <polygon fill="url(#tile)" points="388,265 565,300 480,402 338,351"/>
        <polygon fill="#c9a25c" points="337,351 480,401 481,408 338,358"/>
        <polygon fill="#5f4a2b" points="566,299 674,347 673,353 565,308 482,408 480,401"/>

        <!-- right wall -->
        <polygon fill="url(#dark)" points="482,407 565,308 655,349 641,537 610,553 607,600 566,621 510,620 497,613 480,622"/>
        <polygon fill="#626262" points="598,440 648,422 649,428 613,441"/>
        <polygon fill="#626262" points="613,508 643,492 642,498 613,512"/>
        <polygon fill="#626262" points="623,530 642,517 641,522 624,532"/>
        <polygon fill="#5e5e5e" points="568,590 607,577 606,583 567,598"/>
        <polygon fill="#5e5e5e" points="480,565 497,558 497,565 480,572"/>

        <g class="winfr">
          <path class="wl" d="M542 372q1-17 11-19 11 2 11 14z"/>
          <polygon class="wg" points="542,402 561,397 559,450 541,457"/>
          <polygon class="wl" points="622,368 638,365 634,407 619,412"/>
          <polygon class="wl" points="617,443 632,439 630,478 615,484"/>
          <polygon class="wl" points="584,493 602,486 600,530 582,538"/>
          <polygon class="wl" points="582,568 596,563 596,571 582,575"/>
          <polygon class="wl" points="618,509 630,506 629,513 619,516"/>
        </g>
        <polygon fill="#eee" points="545,405 552,403 551,420 545,421"/>
        <polygon fill="#eee" points="543,450 558,445 558,449 543,455"/>
        <polygon fill="#bd985a" points="583,520 592,516 592,530 583,536"/>
        <g class="mullg">
          <path d="M551 400v55M543 418l18-5M542 435l18-6M630 366l-4 45M621 380l16-4M620 395l16-4M625 441l-2 41M617 455l15-4M616 468l15-4M593 489l-2 45M584 505l18-6M583 520l18-7"/>
          <path d="M553 353v18M546 362l7 8M560 362l-7 8"/>
        </g>

        <!-- bay -->
        <polygon fill="#e6e6e6" points="498,477 511,482 508,620 497,613"/>
        <polygon fill="url(#brickg)" points="511,482 570,483 567,622 508,620"/>
        <polygon fill="#a0a0a0" points="511,482 570,483 570,486 513,490"/>
        <polygon fill="#9c9c9c" points="510,565 567,567 560,571 525,573 511,572"/>
        <polygon fill="#a0a0a0" points="509,595 567,592 567,601 508,601"/>
        <polygon fill="#ccc" points="590,442 607,443 615,463 572,490 570,483 562,478 600,463"/>
        <polygon fill="#bb9658" points="498,477 593,443 600,463 562,478 570,483 511,482"/>
        <polygon fill="#bd985a" stroke="#a37c3c" stroke-width="2" points="532,497 562,497 560,545 530,544"/>
        <path class="mull" d="M546 497l-1 47M532 511h30M531 528h30"/>
        <polygon fill="#ececec" points="532,538 559,538 559,543 532,542"/>
        <polygon fill="#ececec" stroke="#a37c3c" stroke-width="2" points="523,575 543,576 543,583 523,583"/>

        <!-- terraces -->
        <polygon fill="#bb9658" points="260,480 307,466 343,488 298,500"/>
        <polygon fill="#e6e6e6" points="232,488 255,482 258,486 238,491 240,538 238,538"/>
        <polygon fill="#474747" points="235,490 255,486 237,513"/>
        <polygon fill="#474747" points="238,517 263,534 240,538"/>
        <polygon fill="#b9955a" points="255,483 263,481 287,505 268,512 268,537 237,513"/>
        <path d="M250 490l32 16M246 496l23 16M242 503l26 16M239 509l29 20" stroke="#a8864c" stroke-width="1.200"/>
        <polygon fill="#d9d9d9" points="263,480 270,480 298,502 287,505"/>
        <polygon fill="#d9d9d9" points="268,511 343,488 346,490 270,514"/>
        <polygon fill="url(#brick)" points="268,513 397,600 399,662 272,562"/>
        <polygon fill="#bb9658" points="269,512 345,489 479,565 400,592"/>
        <polygon fill="#d8d8d8" points="302,527 399,588 397,592"/>
        <polygon fill="#dcdcdc" points="479,565 400,592 397,601 440,588"/>
        <polygon fill="url(#dark)" points="397,602 479,566 480,620 399,662"/>
        <polygon fill="#626262" points="398,632 480,595 480,603 400,640"/>
        <path d="M412 626l68-31" stroke="#a8864c"/>
        <path d="M480 565v57" stroke="#c8c8c8" stroke-width="1"/>
        <g class="winsm">
          <polygon points="284,532 294,537 294,546 284,541"/>
          <polygon points="362,588 375,596 375,604 362,598"/>
          <polygon class="lite" points="419,603 436,596 436,603 419,610"/>
        </g>

        <!-- pointer -->
        <path d="M460 411h29M474 397v28" stroke="#3c3c3c" stroke-width="1" fill="none"/>
      </svg>
      <div class="vscroll">
        <span class="vthumb"></span><span class="vdither"></span><span class="sb-btn down">▾</span>
      </div>

      <section class="nav-pal">
        <header class="nav-title"><span>Navigator - Project Map</span><b class="nav-close">×</b></header>
        <div class="nav-tabs">
          <span class="bevel side"><svg class="i16"><use href="#n-side"/></svg><i class="mini">▸</i></span>
          <span class="tabset"><span class="bevel tab on"><svg class="tbi"><use href="#n-map"/></svg></span><span class="bevel tab"><svg class="tbi"><use href="#n-view"/></svg></span><span class="bevel tab"><svg class="tbi"><use href="#n-layout"/></svg></span><span class="bevel tab"><svg class="tbi"><use href="#n-pub"/></svg></span></span>
        </div>
        <div class="treebox">
          <ul class="tree">
            <li class="r d0"><i class="ex">−</i><svg class="ti w16"><use href="#s-home"/></svg><span>Модель коттеджа 5</span></li>
            <li class="r d1"><i class="ex">−</i><svg class="ti"><use href="#s-stories"/></svg><span>Stories</span></li>
            <li class="r d2"><svg class="ti"><use href="#s-story"/></svg><span>3. Story</span></li>
            <li class="r d2"><svg class="ti"><use href="#s-story"/></svg><span>2. Story</span></li>
            <li class="r d2"><svg class="ti"><use href="#s-story"/></svg><span>1. Story</span></li>
            <li class="r d2"><svg class="ti"><use href="#s-story"/></svg><span>0. Ground Floor</span></li>
            <li class="r d1"><i class="ex">−</i><svg class="ti"><use href="#s-sec"/></svg><span>Sections/Elevations</span></li>
            <li class="r d2"><svg class="ti"><use href="#s-house"/></svg><span class="tight">S-15 Building Section</span></li>
            <li class="r d2"><svg class="ti"><use href="#s-house"/></svg><span class="tight">S-16 Building Section</span></li>
            <li class="r d1"><svg class="ti"><use href="#s-det"/></svg><span>Details</span></li>
            <li class="r d1"><i class="ex">−</i><svg class="ti"><use href="#s-3d"/></svg><span>3D</span></li>
            <li class="r d2"><svg class="ti"><use href="#s-persp"/></svg><span class="cur">Generic Perspecti</span></li>
            <li class="r d2"><svg class="ti"><use href="#s-axo"/></svg><span>Generic Axonometry</span></li>
            <li class="r d2"><svg class="ti"><use href="#s-path"/></svg><span>00 Untitled Path</span></li>
            <li class="r d1"><i class="ex">−</i><svg class="ti"><use href="#s-sched"/></svg><span>Element Schedules</span></li>
            <li class="r d2"><svg class="ti"><use href="#s-list"/></svg><span>Door List</span></li>
            <li class="r d2"><svg class="ti"><use href="#s-list"/></svg><span>Object Inventory</span></li>
            <li class="r d2"><svg class="ti"><use href="#s-list"/></svg><span>Wall List</span></li>
            <li class="r d2"><svg class="ti"><use href="#s-list"/></svg><span>Window List</span></li>
            <li class="r d1"><i class="ex">−</i><svg class="ti"><use href="#s-idx"/></svg><span>Project Indexes</span></li>
            <li class="r d2"><svg class="ti"><use href="#s-draw"/></svg><span>Drawing List</span></li>
            <li class="r d2"><svg class="ti"><use href="#s-sheet"/></svg><span>Sheet Index</span></li>
            <li class="r d2"><svg class="ti"><use href="#s-view"/></svg><span>View List</span></li>
            <li class="r d1"><i class="ex">+</i><svg class="ti"><use href="#s-lists"/></svg><span>Lists</span></li>
          </ul>
          <div class="tvs"><span class="sb-btn up">▴</span><span class="tvthumb"></span><span class="tvd"></span><span class="sb-btn dn">▾</span></div>
          <div class="ths"><span class="sb-btn l">◂</span><span class="ththumb"></span><span class="thd"></span><span class="sb-btn r2">▸</span></div>
        </div>
        <div class="nav-actions"><span class="bevel act"><svg class="i16"><use href="#n-new"/></svg></span><span class="bevel act"><svg class="i16"><use href="#n-del"/></svg></span></div>
        <div class="pill"><b class="pill-ar">▾</b>Properties</div>
        <div class="prop"><svg class="ti sm"><use href="#s-story"/></svg><input class="p1" value="3." readonly><input class="p2" value="Story" readonly></div>
        <span class="bevel settings">Settings...</span>
      </section>
    </div>

    <div class="status">
      <span class="st on"><svg class="i"><use href="#s-home"/></svg></span><span class="st"><svg class="i"><use href="#zoom"/></svg></span><span class="st"><svg class="i"><use href="#grav"/></svg></span><span class="st"><svg class="i"><use href="#zoom"/></svg></span><span class="st"><svg class="i"><use href="#zoom"/></svg></span><span class="st"><svg class="i"><use href="#zoom"/></svg></span><span class="st"><svg class="i"><use href="#tstar"/></svg></span><span class="st on"><svg class="i"><use href="#orb"/></svg></span><span class="st"><svg class="i"><use href="#walk"/></svg></span><span class="st"><svg class="i"><use href="#orbit"/></svg></span><span class="st"><svg class="i"><use href="#zoom"/></svg></span><span class="st dim"><svg class="i"><use href="#zoom"/></svg></span><span class="st narrow">◂</span>
      <span class="sdither"></span><span class="sb-btn rt">▸</span>
    </div>
  </div>
</div>

<footer class="taskbar">
  <span class="start"><svg class="fl"><use href="#q-flag"/></svg>Пуск</span>
  <span class="ql"><svg class="i"><use href="#q-green"/></svg><svg class="i"><use href="#q-red"/></svg><svg class="i"><use href="#q-blue"/></svg></span>
  <b class="chev">»</b>
  <span class="task"><svg class="i"><use href="#q-doc"/></svg>Тена Создание модели ...</span>
  <span class="task act-t"><svg class="i"><use href="#q-app"/></svg>Модель коттеджа 5...</span>
  <span class="en">EN</span>
  <i class="tb-sep"></i>
  <span class="desk">Рабочий стол</span>
  <svg class="i dsk"><use href="#q-desk"/></svg>
  <b class="chev c2">»</b>
  <span class="tray"><b class="trl">«</b><svg class="i"><use href="#q-find"/></svg><svg class="i"><use href="#q-rec"/></svg><span class="clock">14:17</span></span>
</footer>
</body>
</html>
```
FILE: styles.css
```css
* { box-sizing: border-box; }
html, body { margin: 0; padding: 0; }
html { background: #d4d0c8; }
body {
  width: 940px; height: 752px; overflow: hidden; background: #d4d0c8; color: #222;
  font: 8px/1 "Liberation Sans", Arial, sans-serif;
  text-rendering: geometricPrecision;
  display: flex; flex-direction: column; position: relative;
  filter: blur(.3px);
}
i, b { font-style: normal; }
input { text-rendering: geometricPrecision; }
.defs { display: none; }
.i { width: 14px; height: 14px; display: block; flex: none; }
.i16 { width: 16px; height: 16px; display: block; flex: none; }
.bevel {
  background: #d4d0c8; border: 1px solid; border-color: #fff #6e6c68 #6e6c68 #fff;
  box-shadow: 1px 1px 0 #8a8884; display: flex; align-items: center; justify-content: center;
}

/* Title and menu */
.titlebar {
  height: 13px; flex: none; display: flex; align-items: center; padding-left: 2px; color: #fff;
  background: linear-gradient(90deg, #0f2a70 0%, #3a5f9e 30%, #6f94c8 62%, #a6caf0 100%);
  font: bold 8.7px "Open Sans", "Liberation Sans", sans-serif;
}
.ttl-ic { width: 11px; height: 11px; margin-right: 1px; }
.ttl-text { white-space: nowrap; }
.winbtns { margin-left: auto; padding-right: 2px; display: flex; gap: 1px; }
.wb {
  width: 11px; height: 10px; background: #d4d0c8; border: 1px solid; border-color: #fff #555 #555 #fff;
  color: #111; font: bold 8px/8px "Liberation Sans", sans-serif; text-align: center;
}
.menubar { height: 15px; flex: none; display: flex; align-items: center; padding-left: 3px; }
.menu-ic { width: 11px; height: 13px; margin-right: 5px; }
.mi { margin-right: 7.700px; color: #222; }

/* Toolbars */
.tb1 {
  height: 19px; flex: none; display: flex; align-items: center; overflow: hidden; padding-left: 1px;
  border-top: 1px solid #f0eee8;
}
.grip { width: 3px; height: 15px; flex: none; border: 1px solid; border-color: #fff #888 #888 #fff; margin-right: -1px; }
.s { width: 19.6px; height: 16px; flex: none; display: flex; align-items: center; justify-content: center; }
.s.on { background: #ecebe6; outline: 1px solid #9c9a95; outline-offset: -1px; }
.ar { width: 10px; height: 16px; flex: none; position: relative; }
.ar::after {
  content: ""; position: absolute; left: 2px; top: 7px;
  border: 3px solid transparent; border-top-color: #222; border-bottom: 0;
}
.ar.off::after { border-top-color: #a5a29c; }
.sep { width: 1px; height: 15px; flex: none; background: #a5a29c; margin: 0 2.700px; box-shadow: 1px 0 0 #fff; }
.gap { width: 6.400px; flex: none; }
.tb2row { height: 17px; flex: none; padding-left: 231px; }
.tb2 {
  display: flex; align-items: center; height: 17px; width: 537px; overflow: hidden;
  border-right: 1px solid #a5a29c;
}
.btn3d {
  width: 60px; height: 15px; margin-left: 1px; flex: none; display: flex; align-items: center; gap: 2px; padding-left: 2px;
  background: #e4e2dc; outline: 1px solid #aaa8a2; outline-offset: -1px; white-space: nowrap;
}

/* Layout below */
.body { flex: 1; display: flex; min-height: 0; }
.toolbox {
  width: 22px; flex: none; display: flex; flex-direction: column; align-items: center;
  padding: 4px 1px 0 0; border-right: 1px solid #77756f; box-shadow: inset -1px 0 0 #fff;
}
.t { width: 18px; height: 16.200px; flex: none; display: flex; align-items: center; justify-content: center; }
.t.on { background: #f0eee9; outline: 1px solid #9c9a95; outline-offset: -1px; }
.tsep { height: 6px; width: 18px; flex: none; position: relative; }
.tsep.first { height: 8px; }
.tsep.line::after { content: ""; position: absolute; left: 0; right: 0; top: 2px; height: 2px; border-top: 1px solid #999; border-bottom: 1px solid #fff; }
.work { flex: 1; min-width: 0; display: flex; flex-direction: column; }

/* Info box */
.infowrap { display: flex; height: 39px; flex: none; border-bottom: 1px solid #77756f; }
.navystrip {
  width: 10px; flex: none; background: #0f2a70; color: #fff; position: relative; margin-bottom: 1px;
  text-align: center; font: bold 9px/10px "Liberation Sans", sans-serif;
}
.navyx { display: block; }
.navygrip {
  position: absolute; left: 3px; bottom: 2px; width: 4px; height: 12px;
  background: repeating-linear-gradient(#d8d8e8 0 1px, transparent 1px 3px);
}
.infocol { flex: 1; min-width: 0; display: flex; flex-direction: column; }
.info { height: 28px; flex: none; display: flex; align-items: stretch; position: relative; border-bottom: 1px solid #9c9a95; }
.defset { width: 89px; flex: none; padding-left: 1px; align-self: center; margin-top: 9px; white-space: nowrap; color: #333; }
.winbtn { width: 29px; height: 21px; flex: none; align-self: flex-end; margin-bottom: 1px; }
.namebox { width: 118px; margin-left: 3px; flex: none; display: flex; flex-direction: column; justify-content: space-between; padding: 2px 0 1px; }
.namerow { display: flex; align-items: center; justify-content: space-between; }
.name { font: bold 8.300px "Noto Sans", "Liberation Sans", sans-serif; color: #222; white-space: nowrap; }
.smallbtn { width: 11px; height: 10px; font: 7px "DejaVu Sans", sans-serif; }
.chk { width: 14px; height: 13px; font: 8px "DejaVu Sans", sans-serif; }
.pair { display: flex; gap: 1px; }
.nav { width: 21px; height: 13px; font: 7px "DejaVu Sans", sans-serif; letter-spacing: -.5px; color: #111; }
.toggles { display: flex; margin-left: 4px; align-self: flex-end; margin-bottom: 0; }
.tg { width: 29px; height: 21px; }
.tg.active { background: #ecebe6; }
.tgi { width: 20px; height: 14px; display: block; }
.vline { width: 1px; flex: none; background: #a5a29c; box-shadow: 1px 0 0 #fff; }
.l1 { margin-left: 59px; }
.fp { width: 116px; height: 21px; margin-left: 2px; align-self: flex-end; flex: none; color: #333; }
.l2 { margin-left: 8px; }
.big { width: 30px; height: 26px; flex: none; align-self: center; }
.ab { margin-left: 9px; }
.dims { width: 77px; flex: none; display: flex; flex-direction: column; gap: 1px; margin-left: 2px; padding-top: 3px; }
.dim { display: flex; align-items: center; justify-content: space-between; padding-right: 6px; padding-left: 1px; color: #333; }
.fld {
  width: 58px; height: 11px; padding: 0 1px; font: 8px "Liberation Sans", sans-serif; background: #fff; color: #222;
  border: 1px solid; border-color: #777 #ddd #ddd #777; outline: 0;
}
.fld.dis { background: #d4d0c8; color: #8c8a85; height: 12px; }
.l3 { margin-left: 0; }
.hb { margin-left: 11px; }
.hfld { margin-left: 14px; align-self: center; margin-top: 2px; }
.l4 { margin-left: 2px; }
.anchor { width: 120px; flex: none; padding: 2px 0 0 1px; }
.anch-l { display: block; height: 9px; line-height: 9px; color: #333; }
.select {
  width: 116px; height: 15px; background: #fff; border: 1px solid; border-color: #777 #ddd #ddd #777;
  display: flex; align-items: center; justify-content: space-between; padding-left: 4px; color: #222;
}
.sarrow { width: 12px; height: 13px; background: #d4d0c8; border: 1px solid; border-color: #fff #666 #666 #fff; font: 9px/10px "DejaVu Sans", sans-serif; text-align: center; }
.hstrip { height: 10px; flex: none; display: flex; align-items: center; padding-top: 1px; }
.sb-btn {
  display: flex; align-items: center; justify-content: center; background: #d4d0c8; flex: none;
  border: 1px solid; border-color: #fff #6e6c68 #6e6c68 #fff; font: 7px/1 "DejaVu Sans", sans-serif; color: #222;
}
.sm { width: 9px; height: 8px; margin-left: 2px; }
.hthumb { width: 813px; height: 8px; margin-left: 3px; flex: none; background: #d4d0c8; border: 1px solid; border-color: #fff #6e6c68 #6e6c68 #fff; }
.hdither, .vdither, .sdither, .tvd, .thd { background: repeating-conic-gradient(#e2dfd9 0 25%, #efede8 0 50%) 0 0/2px 2px; }
.hdither { flex: 1; height: 8px; }
.end { width: 11px; height: 8px; margin-right: 2px; }

/* Canvas */
.canvasrow { flex: 1; min-height: 0; display: flex; position: relative; background: #fff; border-left: 1px solid #77756f; }
.house { flex: none; width: 904px; height: 613px; display: block; }
.winfr .wd { fill: #454545; stroke: #bb9658; stroke-width: 1.500; }
.winfr .wl { fill: #e8e6e4; stroke: #a98540; stroke-width: 1.500; }
.winfr .wg { fill: #bd985a; stroke: #a37c3c; stroke-width: 1.500; }
.mull { fill: none; stroke: #bb9658; stroke-width: .8; }
.mullg { fill: none; stroke: #bb9658; stroke-width: .8; }
.winsm polygon { fill: #555; stroke: #b08c4c; stroke-width: 1.500; }
.winsm .lite { fill: #eee; }
.vscroll { flex: none; width: 12px; display: flex; flex-direction: column; }
.vthumb { height: 435px; flex: none; background: #d4d0c8; border: 1px solid; border-color: #fff #6e6c68 #6e6c68 #fff; }
.vdither { flex: 1; }
.down { height: 10px; }

/* Navigator palette */
.nav-pal {
  position: absolute; left: 760px; top: 1px; width: 151px; height: 434px;
  background: #d4d0c8; border: 1px solid; border-color: #e8e6e0 #444 #444 #e8e6e0; padding: 0 2px 1px;
  display: flex; flex-direction: column;
}
.nav-title {
  height: 11px; flex: none; display: flex; align-items: center; justify-content: space-between; padding: 0 2px 0 1px;
  margin: 2px 0 0 0; background: linear-gradient(90deg, #0f2a70, #a6caf0); color: #fff;
  font: bold 8.500px "Open Sans", "Liberation Sans", sans-serif; white-space: nowrap;
}
.nav-close { width: 9px; height: 9px; background: #c8c6c0; color: #444; border: 1px solid #888; font: 8px/7px "Liberation Sans", sans-serif; text-align: center; }
.nav-tabs { height: 22px; flex: none; display: flex; align-items: center; padding: 2px 0 0 1px; }
.side { width: 23px; height: 17px; position: relative; justify-content: flex-start; padding-left: 1px; }
.mini { position: absolute; right: 0; bottom: 0; font: 6px/1 "DejaVu Sans", sans-serif; }
.tabset { display: flex; margin-left: auto; margin-right: 1px; gap: 1px; }
.tab { width: 22px; height: 17px; }
.tab.on { background: #ecebe6; }
.tbi { width: 13px; height: 12px; display: block; }
.treebox {
  position: relative; width: 143px; height: 298px; flex: none; background: #fff; margin-left: 1px;
  border: 1px solid; border-color: #555 #ddd #ddd #555; padding-right: 12px;
  overflow: hidden;
}
.tree { list-style: none; margin: 0; padding: 0; position: relative; overflow: hidden; height: 284px; white-space: nowrap; color: #333; }
.tree::before { content: ""; position: absolute; left: 7px; top: 6px; bottom: 7px; border-left: 1px dotted #999; }
.r { height: 11.760px; display: flex; align-items: center; position: relative; }
.r.d0 { padding-left: 16px; height: 13px; }
.r.d1 { padding-left: 31px; }
.r.d2 { padding-left: 45px; }
.d1::before { content: ""; position: absolute; left: 7px; top: 50%; width: 23px; border-top: 1px dotted #999; }
.d2::before { content: ""; position: absolute; left: 23px; top: -6px; height: 12px; width: 22px; border: dotted #999; border-width: 0 0 1px 1px; }
.ex {
  position: absolute; top: 2px; width: 7px; height: 7px; background: #fff; border: 1px solid #888; z-index: 1;
  font: 7px/5px "Liberation Sans", sans-serif; text-align: center; color: #111;
}
.d0 .ex { left: 4px; }
.d1 .ex { left: 19px; }
.ti { width: 11px; height: 11px; flex: none; margin-right: 3px; position: relative; z-index: 1; background: #fff; }
.w16 { width: 12px; height: 11px; margin-right: 3px; }
.tight { letter-spacing: -.32px; }
.cur { font-weight: bold; color: #111; outline: 1px solid #111; padding: 0 1px; font-size: 8.400px; }
.tvs { position: absolute; right: 0; top: 0; bottom: 11px; width: 12px; display: flex; flex-direction: column; }
.up, .dn { height: 11px; }
.tvthumb { height: 223px; flex: none; background: #d4d0c8; border: 1px solid; border-color: #fff #6e6c68 #6e6c68 #fff; }
.tvd { flex: 1; }
.ths { position: absolute; left: 0; right: 0; bottom: 0; height: 12px; display: flex; background: #d4d0c8; }
.l, .r2 { width: 12px; }
.ththumb { width: 67px; flex: none; background: #d4d0c8; border: 1px solid; border-color: #fff #6e6c68 #6e6c68 #fff; }
.thd { flex: 1; }
.r2 { margin-right: 12px; }
.nav-actions { display: flex; justify-content: flex-end; gap: 1px; height: 24px; flex: none; align-items: flex-end; padding-right: 1px; }
.act { width: 16px; height: 17px; }
.pill {
  height: 13px; flex: none; margin-top: 4px; background: #e6e4de; border-radius: 7px; display: flex; align-items: center;
  padding-left: 9px; gap: 7px; color: #333;
}
.pill-ar { font: 8px "DejaVu Sans", sans-serif; color: #111; }
.prop { display: flex; align-items: center; height: 12px; flex: none; margin-top: 3px; }
.ti.sm { width: 9px; height: 9px; margin: 0 1px 0 0; background: none; }
.p1 { width: 30px; height: 12px; padding: 0 1px; border: 1px solid #bdbab4; background: #d0cdc5; color: #555; font: 8px "Liberation Sans", sans-serif; outline: 0; }
.p2 { width: 102px; height: 12px; margin-left: 2px; padding: 0 1px; border: 1px solid; border-color: #888 #eee #eee #888; background: #fff; color: #333; font: 8px "Liberation Sans", sans-serif; outline: 0; }
.settings { width: 125px; height: 16px; flex: none; margin: 4px 0 0 11px; color: #333; }

/* Status strip */
.status { height: 13px; flex: none; display: flex; align-items: center; border-left: 1px solid #77756f; padding-left: 1px; }
.st { width: 17.500px; height: 12px; flex: none; display: flex; align-items: center; justify-content: center; background: #d4d0c8; border: 1px solid; border-color: #fff #6e6c68 #6e6c68 #fff; }
.st .i { width: 11px; height: 11px; }
.st.on { background: #ecebe6; }
.st.dim { opacity: .55; }
.st.narrow { width: 10px; font: 7px "DejaVu Sans", sans-serif; color: #999; margin-left: 1px; }
.sdither { flex: 1; height: 13px; }
.rt { width: 12px; height: 11px; margin-right: 11px; color: #777; }

/* Taskbar */
.taskbar {
  height: 23px; flex: none; display: flex; align-items: center; padding-left: 2px;
  border-top: 1px solid #fff; box-shadow: 0 -1px 0 #888; color: #333;
}
.start {
  width: 37px; height: 17px; flex: none; display: flex; align-items: center; gap: 2px; padding-left: 1px;
  background: #d4d0c8; border: 1px solid; border-color: #fff #444 #444 #fff; font: bold 8px "Noto Sans", sans-serif; color: #111;
}
.fl { width: 12px; height: 12px; flex: none; }
.ql { display: flex; gap: 3.500px; margin-left: 5px; flex: none; }
.chev { margin-left: 4px; width: 10px; flex: none; font: bold 9px "Liberation Sans", sans-serif; align-self: flex-start; margin-top: 4px; }
.task {
  width: 117px; height: 17px; flex: none; display: flex; align-items: center; gap: 2px; padding-left: 2px; margin-left: 0;
  background: #d4d0c8; border: 1px solid; border-color: #fff #444 #444 #fff; white-space: nowrap;
}
.act-t { width: 116px; margin-left: 3px; background: #eeece7; border-color: #444 #fff #fff #444; font: bold 8.600px "Noto Sans", sans-serif; color: #111; }
.en { width: 12px; height: 12px; margin-left: 241px; flex: none; background: #12347c; color: #fff; font-size: 7.500px; display: flex; align-items: center; justify-content: center; }
.tb-sep { width: 1px; height: 17px; margin-left: 3px; flex: none; background: #a5a29c; box-shadow: 1px 0 0 #fff; }
.desk { margin-left: 189px; width: 54px; flex: none; white-space: nowrap; }
.dsk { margin-left: 2px; }
.c2 { margin-left: 3px; width: 8px; }
.tray {
  width: 69px; height: 17px; flex: none; display: flex; align-items: center; padding-left: 3px; margin-left: -1px;
  border: 1px solid; border-color: #888 #fff #fff #888;
}
.tray .i { margin-left: 0; }
.trl { font: bold 9px "Liberation Sans", sans-serif; width: 8px; margin-right: 1px; }
.clock { margin-left: 5px; font-size: 8px; }
```
